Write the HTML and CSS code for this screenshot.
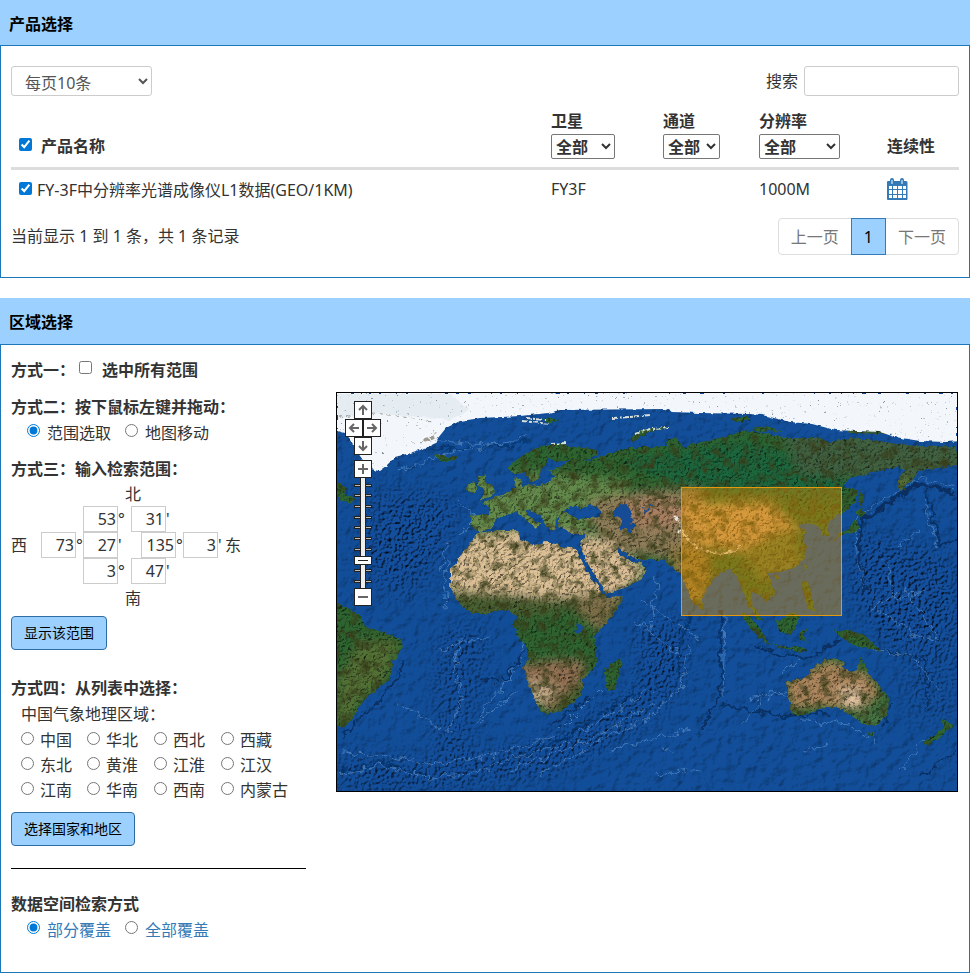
FILE: index.html
```html
<!DOCTYPE html>
<html lang="zh-CN">
<head>
<meta charset="utf-8">
<meta name="viewport" content="width=device-width, initial-scale=1">
<title>产品选择</title>
<link rel="stylesheet" href="styles.css">
</head>
<body>
<section class="panel">
  <h2 class="panel-head">产品选择</h2>
  <div class="panel-body products">
    <div class="toolbar">
      <select class="page-size" aria-label="每页条数"><option>每页10条</option></select>
      <label class="search">搜索 <input type="text"></label>
    </div>
    <table class="product-table">
      <thead>
        <tr>
          <th class="col-name"><label><input type="checkbox" checked><span>产品名称</span></label></th>
          <th class="col-sat"><label for="sat">卫星</label><select id="sat"><option>全部</option></select></th>
          <th class="col-chan"><label for="chan">通道</label><select id="chan"><option>全部</option></select></th>
          <th class="col-res"><label for="res">分辨率</label><select id="res"><option>全部</option></select></th>
          <th class="col-cont">连续性</th>
        </tr>
      </thead>
      <tbody>
        <tr>
          <td class="col-name"><label><input type="checkbox" checked><span>FY-3F中分辨率光谱成像仪L1数据(GEO/1KM)</span></label></td>
          <td>FY3F</td>
          <td></td>
          <td>1000M</td>
          <td><a class="calendar" href="#" aria-label="连续性"><svg width="21" height="22" viewBox="0 0 21 22"><path fill="#337ab7" d="M1 3h2V2a2 2 0 0 1 4 0v1h6V2a2 2 0 0 1 4 0v1h2a1.500 1.500 0 0 1 1.500 1.500V21a1 1 0 0 1-1 1H1a1 1 0 0 1-1-1V4a1 1 0 0 1 1-1z"/><path stroke="#fff" d="M5 2v4M15 2v4"/><path fill="#fff" d="M2 8h3v3H2zM6 8h4v3H6zM11 8h4v3h-4zM16 8h3v3h-3zM2 12h3v4H2zM6 12h4v4H6zM11 12h4v4h-4zM16 12h3v4h-3zM2 17h3v3H2zM6 17h4v3H6zM11 17h4v3h-4zM16 17h3v3h-3z"/></svg></a></td>
        </tr>
      </tbody>
    </table>
    <div class="table-foot">
      <span>当前显示 1 到 1 条，共 1 条记录</span>
      <nav class="pager"><a href="#">上一页</a><a class="current" href="#">1</a><a href="#">下一页</a></nav>
    </div>
  </div>
</section>

<section class="panel">
  <h2 class="panel-head region-head">区域选择</h2>
  <div class="panel-body region">
    <div class="side">
      <div class="line strong">方式一：<label class="all"><input type="checkbox"><span>选中所有范围</span></label></div>
      <div class="group">
        <h3>方式二：按下鼠标左键并拖动：</h3>
        <div class="line modes">
          <label><input type="radio" name="mode" checked><span>范围选取</span></label>
          <label><input type="radio" name="mode"><span>地图移动</span></label>
        </div>
      </div>
      <div class="group range-group">
        <h3>方式三：输入检索范围：</h3>
        <div class="pole">北</div>
        <div class="coords lat">
          <label><input type="text" value="53" aria-label="北纬度">°</label>
          <label><input type="text" value="31" aria-label="北纬分">'</label>
        </div>
        <div class="coords lon">
          <span class="west">西</span>
          <label><input type="text" value="73" aria-label="西经度">°</label>
          <label><input type="text" value="27" aria-label="西经分">'</label>
          <label class="east-deg"><input type="text" value="135" aria-label="东经度">°</label>
          <label><input type="text" value="3" aria-label="东经分">'</label>
          <span>东</span>
        </div>
        <div class="coords lat">
          <label><input type="text" value="3" aria-label="南纬度">°</label>
          <label><input type="text" value="47" aria-label="南纬分">'</label>
        </div>
        <div class="pole south">南</div>
        <button class="btn" type="button">显示该范围</button>
      </div>
      <div class="group list-group">
        <h3>方式四：从列表中选择：</h3>
        <div class="line sub">中国气象地理区域：</div>
        <div class="areas">
          <label><input type="radio" name="area"><span>中国</span></label>
          <label><input type="radio" name="area"><span>华北</span></label>
          <label><input type="radio" name="area"><span>西北</span></label>
          <label><input type="radio" name="area"><span>西藏</span></label>
          <label><input type="radio" name="area"><span>东北</span></label>
          <label><input type="radio" name="area"><span>黄淮</span></label>
          <label><input type="radio" name="area"><span>江淮</span></label>
          <label><input type="radio" name="area"><span>江汉</span></label>
          <label><input type="radio" name="area"><span>江南</span></label>
          <label><input type="radio" name="area"><span>华南</span></label>
          <label><input type="radio" name="area"><span>西南</span></label>
          <label><input type="radio" name="area"><span>内蒙古</span></label>
        </div>
        <button class="btn" type="button">选择国家和地区</button>
      </div>
      <hr>
      <h3>数据空间检索方式</h3>
      <div class="line modes cover">
        <label><input type="radio" name="cover" checked><span>部分覆盖</span></label>
        <label><input type="radio" name="cover"><span>全部覆盖</span></label>
      </div>
    </div>

    <div class="map">
      <svg class="world" viewBox="337 393 620 398" preserveAspectRatio="xMidYMid slice" role="img" aria-label="世界地图">
        <defs>
          <filter id="seaRelief" x="0" y="0" width="100%" height="100%" color-interpolation-filters="sRGB">
            <feTurbulence type="fractalNoise" baseFrequency=".1" numOctaves="4" seed="8" result="n"/>
            <feColorMatrix in="n" values="0 0 0 0 0  0 0 0 0 0  0 0 0 0 0  1 0 0 0 0" result="a"/>
            <feDiffuseLighting in="a" surfaceScale="1" diffuseConstant="1.420" lighting-color="#fff" result="l"><feDistantLight azimuth="225" elevation="45"/></feDiffuseLighting>
            <feComposite in="SourceGraphic" in2="l" operator="arithmetic" k1="1"/>
          </filter>
          <filter id="seaRough" x="0" y="0" width="100%" height="100%" color-interpolation-filters="sRGB">
            <feTurbulence type="fractalNoise" baseFrequency=".3" numOctaves="3" seed="3" result="n"/>
            <feColorMatrix in="n" values="0 0 0 0 0  0 0 0 0 0  0 0 0 0 0  1.500 0 0 0 0" result="a"/>
            <feDiffuseLighting in="a" surfaceScale="1.600" diffuseConstant="1.500" lighting-color="#fff" result="l"><feDistantLight azimuth="225" elevation="42"/></feDiffuseLighting>
            <feComposite in="SourceGraphic" in2="l" operator="arithmetic" k1="1"/>
          </filter>
          <filter id="landRelief" filterUnits="userSpaceOnUse" x="337" y="393" width="620" height="398" color-interpolation-filters="sRGB">
            <feTurbulence type="fractalNoise" baseFrequency=".4" numOctaves="3" seed="5" result="n"/>
            <feColorMatrix in="n" values="0 0 0 0 0  0 0 0 0 0  0 0 0 0 0  1.500 0 0 0 0" result="a"/>
            <feDiffuseLighting in="a" surfaceScale="1" diffuseConstant="1.500" lighting-color="#fff" result="l"><feDistantLight azimuth="225" elevation="42"/></feDiffuseLighting>
            <feComposite in="SourceGraphic" in2="l" operator="arithmetic" k1="1" result="lit"/>
            <feTurbulence type="fractalNoise" baseFrequency=".1" numOctaves="4" seed="21" result="t"/>
            <feColorMatrix in="t" values="0 0 0 0 .22  0 0 0 0 .24  0 0 0 0 .1  2.500 0 0 0 -1.150" result="blot"/>
            <feMerge result="mix"><feMergeNode in="lit"/><feMergeNode in="blot"/></feMerge>
            <feComposite in="mix" in2="SourceGraphic" operator="in" result="cut"/>
            <feTurbulence type="fractalNoise" baseFrequency=".18" numOctaves="2" seed="12" result="d"/>
            <feDisplacementMap in="cut" in2="d" scale="5" xChannelSelector="R" yChannelSelector="G"/>
          </filter>
          <filter id="iceGrain" filterUnits="userSpaceOnUse" x="337" y="393" width="620" height="398" color-interpolation-filters="sRGB">
            <feTurbulence type="fractalNoise" baseFrequency=".6" numOctaves="2" seed="4" result="n"/>
            <feColorMatrix in="n" values="0 0 0 0 .5  0 0 0 0 .55  0 0 0 0 .6  7 0 0 0 -5" result="s"/>
            <feComposite in="s" in2="SourceGraphic" operator="in" result="sp"/>
            <feMerge result="m"><feMergeNode in="SourceGraphic"/><feMergeNode in="sp"/></feMerge>
            <feTurbulence type="fractalNoise" baseFrequency=".18" numOctaves="2" seed="12" result="d"/>
            <feDisplacementMap in="m" in2="d" scale="4" xChannelSelector="R" yChannelSelector="G"/>
          </filter>
          <filter id="ridge" filterUnits="userSpaceOnUse" x="337" y="393" width="620" height="398">
            <feTurbulence type="fractalNoise" baseFrequency=".12" numOctaves="3" seed="2" result="d"/>
            <feDisplacementMap in="SourceGraphic" in2="d" scale="12" xChannelSelector="R" yChannelSelector="G"/>
          </filter>
          <filter id="soft" x="-30%" y="-30%" width="160%" height="160%"><feGaussianBlur stdDeviation="5"/></filter>
          <filter id="softer" x="-30%" y="-30%" width="160%" height="160%"><feGaussianBlur stdDeviation="12"/></filter>
          <mask id="roughMask"><g fill="#fff" filter="url(#softer)">
            <path d="M375 490L460 500L440 560L400 600L360 560z"/>
            <path d="M440 625L490 630L465 760L435 760z" opacity=".8"/>
            <path d="M337 757L440 765L540 745L640 690L650 720L560 770L440 790H337z"/>
            <path d="M860 530L957 560V640L890 650L850 590z"/>
            <path d="M900 640L957 640V720L910 720z" opacity=".6"/>
            <path d="M640 620L690 620L680 690L640 720z"/>
          </g></mask>
          <clipPath id="land">
            <!-- Europe and Asia -->
            <path d="M507 468L516 460L528 452L540 446L560 443L575 447L594 449L598 454L585 461L600 457L622 449L640 447L665 447L668 439L678 438L683 448L692 444L705 441L722 437L745 430L765 433L785 438L800 438L815 437L830 442L850 438L880 441L896 444L925 447L957 446V465L938 468L918 471L912 480L902 492L896 487L899 476L907 469L898 467L870 473L850 478L844 487L857 490L857 501L846 511L834 518L827 523L830 535L822 536L818 526L806 523L798 526L806 531L804 540L807 550L803 560L794 568L780 572L767 573L772 584L776 595L767 602L760 594L752 593L750 602L758 612L763 622L757 620L748 605L743 590L736 576L728 569L716 577L706 589L702 603L695 605L689 595L683 578L672 567L664 560L642 560L628 556L618 547L620 556L632 562L640 562L647 571L640 580L624 588L606 594L598 580L586 561L580 546L585 534L572 534L559 526L559 516L565 512L578 519L600 517L600 510L590 504L580 508L575 505L566 509L556 520L555 530L548 528L541 517L531 510L525 510L532 519L539 523L536 529L526 520L516 511L508 515L497 518L491 528L481 532L472 528L470 516L489 514L490 507L482 503L493 498L507 493L514 487L516 477L521 480L522 487L545 484L556 477L548 470L558 468L569 461L556 462L548 457L548 463L541 470L539 480L531 482L525 473L514 474z"/>
            <!-- Africa -->
            <path d="M477 533L500 530L519 530L521 539L535 546L548 541L560 546L576 549L588 573L599 588L607 597L624 596L615 613L601 629L595 637L597 658L597 665L583 680L583 691L574 702L560 712L545 714L540 713L535 700L528 682L523 668L528 658L526 647L517 635L514 625L517 616L510 611L500 610L486 614L472 614L460 604L450 590L450 571L457 560L465 550z"/>
            <path d="M605 668L620 658L622 665L615 690L608 691L605 680z"/>
            <!-- South America -->
            <path d="M337 603L350 610L361 616L365 626L385 633L401 639L402 649L393 662L389 680L376 690L364 700L354 716L345 727L337 725z"/>
            <!-- British Isles, Iceland, Labrador -->
            <path d="M478 477L485 475L486 482L492 486L496 491L492 496L480 500L484 493L483 488L478 485zM467 484L475 482L477 488L473 493L466 490zM433 456L440 454L448 457L457 456L455 460L443 462zM337 482L348 488L344 493L356 499L350 504L342 501L337 496z"/>
            <!-- Arctic islands -->
            <path d="M629 440L638 431L652 428L670 427L668 429L650 431L640 438L631 442zM540 418L561 419L550 424zM728 419L746 416L751 420L740 422zM750 428L766 426L784 431L760 432zM848 431L887 431L885 434L850 433z"/>
            <!-- Japan, Taiwan, Philippines -->
            <path d="M860 508L866 513L860 518L855 513zM855 518L859 529L850 534L840 536L832 542L837 534L849 529zM860 489L863 496L861 507L859 505zM805 563L808 568L804 571zM803 580L809 583L813 603L817 612L808 609L803 594zM774 575L780 577L777 580z"/>
            <!-- Indonesia and New Guinea -->
            <path d="M740 612L747 614L762 630L767 642L780 646L801 647L810 650L801 652L782 648L765 643L751 629zM775 622L785 617L793 611L800 617L795 628L792 635L780 632zM800 631L809 629L803 634L808 642L800 640zM832 627L838 632L848 630L865 635L880 650L888 652L875 650L863 648L850 644L840 636z"/>
            <!-- Australia and New Zealand -->
            <path d="M787 682L805 677L812 668L825 660L834 658L844 660L843 668L853 672L858 666L861 656L866 667L870 675L881 686L889 699L888 712L880 724L867 726L855 720L848 713L837 707L820 709L805 715L793 715L788 698zM866 732L876 733L873 738zM923 742L932 736L944 727L941 718L953 725L947 732L937 740L928 746z"/>
            <path d="M700 600L704 605L702 610L698 607z"/>
          </clipPath>
        </defs>
        <rect x="337" y="393" width="620" height="398" fill="#124e99" filter="url(#seaRelief)"/>
        <rect x="337" y="393" width="620" height="398" fill="#144f9d" filter="url(#seaRough)" mask="url(#roughMask)"/>
        <g filter="url(#ridge)" fill="none">
          <g stroke="#082f60" stroke-width="3">
            <path d="M957 493L938 490L918 483L880 508L860 522L859 555L865 590"/>
            <path stroke-width="4" d="M915 485L882 508L862 520"/>
            <path stroke-width="2" d="M926 490L932 510L935 530L940 545L957 540M722 610L720 695L700 730M720 705L780 716L830 714M752 645L780 655L810 657L840 640M885 650L925 660L928 710M957 750L930 770L920 775"/>
            <path stroke-width="2" d="M343 738L362 716L385 695L400 675L404 660M550 725L575 709L590 697M480 680L505 680L525 650M890 705L882 728"/>
            <path stroke-width="2" opacity=".6" d="M500 765L560 740L600 715L640 690M337 773L380 763L430 776M425 450L500 447L530 440M700 590L681 640L676 670"/>
          </g>
          <g stroke="#6ea0d6" stroke-width="1" opacity=".55">
            <path d="M955 488L920 478L878 503L857 517L856 555M925 497L929 520L937 545M858 560L864 585"/>
            <path d="M460 640L455 670L462 700L447 735M440 650L490 635M340 752L385 755L430 764L495 755L555 735M337 775L380 765L430 778L490 770"/>
            <path d="M490 765L560 745L600 720L650 690M510 770L590 740L650 705M540 775L610 735L645 720M560 730L600 690"/>
            <path d="M425 440L500 445L530 435M400 470L460 450L500 445M457 500L475 515L462 535M447 590L446 610M690 645L680 690L645 720"/>
            <path d="M725 615L723 695M660 745L675 755M790 700L770 690L740 725M870 650L910 655L940 690M900 770L925 740M780 674L800 660"/>
            <path d="M640 600L700 640M635 620L680 655M657 580L650 630M800 690L750 700M450 540L440 570M520 690L480 720M440 730L395 700"/>
            <path d="M447 560L444 610M525 620L521 660L500 690L475 720M885 560L895 600L925 590M870 610L905 590L940 640M900 545L920 530"/>
            <path d="M610 750L650 740L690 730M655 775L700 770M805 750L830 745M880 610L910 632L935 640M800 720L850 725L880 745"/>
          </g>
        </g>
        <g filter="url(#landRelief)"><g clip-path="url(#land)">
          <rect x="337" y="393" width="620" height="398" fill="#2e6430"/>
          <g filter="url(#soft)">
            <path fill="#638a4c" d="M460 475L540 472L630 480L620 510L560 540L465 540z"/>
            <path fill="#1b663d" d="M620 460L740 440L845 470L840 500L690 490z"/>
            <path fill="#3f603f" d="M780 430H960V480L800 475z"/>
            <path fill="#8d7c58" d="M590 500L650 490L700 490L715 535L680 560L610 550L590 520z"/>
            <path fill="#a88060" d="M618 500L670 498L690 520L655 530L632 525z"/>
            <path fill="#dcc096" d="M430 541L480 536L530 530L580 535L588 570L605 594L550 602L480 592L430 590z"/>
            <path fill="#dcbf96" d="M582 532L610 542L650 572L606 600L580 560z"/>
            <path fill="#c59a64" d="M681 505L770 502L800 530L740 552L700 545z"/>
            <path fill="#8b773c" d="M670 545L710 550L710 590L692 610L672 580z"/>
            <path fill="#4a6030" d="M440 592L500 593L555 598L600 593L600 608L500 620L450 615z"/>
            <path fill="#7d7048" d="M580 597L628 590L604 633L590 625L575 610z"/>
            <path fill="#927152" d="M518 665L550 660L585 660L580 695L550 710L530 700z"/>
            <path fill="#c0a786" d="M522 680L545 682L560 690L540 706L530 700z"/>
            <path fill="#4b5e2f" d="M555 700L585 680L575 705L550 720z"/>
            <path fill="#527034" d="M360 640L400 640L385 680L360 700L350 720L337 725V680z"/>
            <path fill="#ab855c" d="M785 680L830 660L870 675L880 695L860 710L820 706L790 710z"/>
            <path fill="#e8c9a8" d="M835 690L860 688L865 705L850 708z"/>
            <path fill="#477445" d="M852 718L880 705L895 695V730H850z"/>
            <path fill="#60753a" d="M740 550L790 525L805 570L760 580zM895 480L910 475L910 490L898 495z"/>
          </g>
          <g fill="none" stroke-linecap="round">
            <path stroke="#e7d6b5" stroke-width="2" d="M681 530L690 541L703 551L720 554L735 551L740 546"/>
            <path stroke="#eee5d8" stroke-width="3" stroke-dasharray="3 4" d="M676 517L681 524L679 532"/>
          </g>
        </g></g>
        <g filter="url(#ridge)" fill="#124c96"><path d="M618 506L628 504L631 511L629 517L634 521L632 530L622 531L620 521L615 516L614 511z"/><ellipse cx="578" cy="628" rx="4" ry="3"/><path d="M643 507L650 506L649 511L644 511z"/></g>
        <g filter="url(#iceGrain)">
          <path fill="#f3f7fb" d="M334 389H962V441L945 442L920 441L895 437L880 432L835 430L812 424L790 422L762 415L750 414L700 413L672 412L665 409L560 410L548 413L520 416L480 418L460 421L446 428L438 438L436 443L425 448L410 453L395 457L386 466L379 471L370 469L360 456L350 439L345 433L334 430z"/>
          <path fill="#dce6ed" d="M337 394L450 394L470 410L450 420L420 417L380 414L337 418z" opacity=".6"/>
          <path fill="none" stroke="#99958a" stroke-width="1" stroke-dasharray="3 5" d="M340 417L375 413L410 418L432 421M421 443L433 436L438 430"/>
          <path fill="none" stroke="#766f5c" stroke-width="4" stroke-dasharray="5 2" opacity=".7" d="M424 441L434 437"/>
          <path fill="none" stroke="#d8e0dc" stroke-width="2" stroke-dasharray="5 2 3 1" d="M522 421L550 424M526 418L545 420M612 418L630 417L650 415M635 434L650 429L669 428M550 444L566 443"/>
        </g>
        <rect x="681.5" y="487.5" width="160" height="128" fill="#e90" fill-opacity=".4"/>
        <path fill="#e39a10" d="M681 487h161v129H681zm1 1v127h159V488z" fill-rule="evenodd"/>
      </svg>
      <div class="map-nav">
        <button class="nav up" type="button" aria-label="向上"><svg viewBox="0 0 16 16"><path d="M8 13V4M4 8l4-4 4 4"/></svg></button>
        <button class="nav left" type="button" aria-label="向左"><svg viewBox="0 0 16 16"><path d="M13 8H4M8 4L4 8l4 4"/></svg></button>
        <button class="nav right" type="button" aria-label="向右"><svg viewBox="0 0 16 16"><path d="M3 8h9M8 4l4 4-4 4"/></svg></button>
        <button class="nav down" type="button" aria-label="向下"><svg viewBox="0 0 16 16"><path d="M8 3v9M4 8l4 4 4-4"/></svg></button>
      </div>
      <div class="map-zoom">
        <button class="nav" type="button" aria-label="放大"><svg viewBox="0 0 16 16"><path d="M3 8h10M8 3v10"/></svg></button>
        <div class="slider">
          <svg class="ticks" viewBox="0 0 18 110"><g stroke="#222" stroke-width="3"><path d="M0 7.500h18M0 17.500h18M0 28.500h18M0 39.500h18M0 49.500h18M0 60.500h18M0 71.500h18M0 92.500h18M0 103.500h18"/></g><g stroke="#bbb"><path d="M1 7.500h16M1 17.500h16M1 28.500h16M1 39.500h16M1 49.500h16M1 60.500h16M1 71.500h16M1 92.500h16M1 103.500h16"/></g></svg>
          <input type="range" min="0" max="11" step="0.5" value="2.5" aria-label="缩放级别">
        </div>
        <button class="nav" type="button" aria-label="缩小"><svg viewBox="0 0 16 16"><path d="M3 8h10"/></svg></button>
      </div>
    </div>
  </div>
</section>
</body>
</html>
```
FILE: styles.css
```css
* {
  box-sizing: border-box;
}

body {
  margin: 0;
  color: #333;
  background: #fff;
  font: 16px/26px "Noto Sans", "Noto Sans CJK SC", sans-serif;
}

input,
select,
button {
  font-family: inherit;
  color: inherit;
}

input[type="checkbox"],
input[type="radio"] {
  flex: none;
  width: 13px;
  height: 13px;
  margin: 0 6px 4px 0;
  accent-color: #0078d7;
}

label {
  display: flex;
  align-items: center;
}

h2,
h3 {
  margin: 0;
  font-size: 16px;
  font-weight: bold;
}

a {
  color: #337ab7;
  text-decoration: none;
}

.panel {
  margin-bottom: 20px;
}

.panel:last-child {
  margin-bottom: 0;
}

.panel-head {
  padding: 11px 9px 8px;
  color: #000;
  background: #9bd0ff;
}

.region-head {
  padding-bottom: 9px;
}

.panel-body {
  border: 1px solid #1c77b8;
}

.products {
  padding: 20px 10px 22px;
}

.toolbar {
  display: flex;
  justify-content: space-between;
  align-items: center;
  height: 30px;
}

.page-size {
  width: 141px;
  height: 30px;
  padding: 4px 0 0 9px;
  color: #555;
  background: #fff;
  border: 1px solid #ccc;
  border-radius: 3px;
  font-size: 16px;
}

.search {
  gap: 6px;
}

.search input {
  width: 155px;
  height: 30px;
  border: 1px solid #ccc;
  border-radius: 3px;
  font-size: 16px;
}

.product-table {
  width: 100%;
  margin-top: 12px;
  table-layout: fixed;
  border-collapse: collapse;
}

.product-table th {
  padding: 0 0 8px;
  text-align: left;
  vertical-align: bottom;
  border-bottom: 3px solid #ddd;
}

.product-table td {
  height: 39px;
  padding: 0;
  vertical-align: middle;
}

.product-table th select {
  display: block;
  height: 25px;
  padding: 0;
  background: #fff;
  border: 1px solid #767676;
  border-radius: 2px;
  font-size: 16px;
  font-weight: bold;
}

.product-table .col-name label {
  padding-left: 8px;
}

.product-table td.col-name {
  padding-top: 3px;
}

.product-table td label input {
  margin-right: 5px;
}

.product-table th label input {
  margin-right: 9px;
}

.col-sat {
  width: 112px;
}

.col-sat select {
  width: 64px;
}

.col-chan {
  width: 96px;
}

.col-chan select {
  width: 57px;
}

.col-res {
  width: 128px;
}

.col-res select {
  width: 81px;
}

.col-cont {
  width: 72px;
}

.calendar,
.calendar svg {
  display: block;
}

.table-foot {
  display: flex;
  justify-content: space-between;
  align-items: center;
  margin-top: 10px;
}

.pager {
  display: flex;
  border: 1px solid #ddd;
  border-radius: 4px;
}

.pager a {
  padding: 5px 12px 4px;
  color: #777;
}

.pager .current {
  margin: -1px 0;
  color: #000;
  background: #9bd0ff;
  border: 1px solid #337ab7;
}

.region {
  display: flex;
  align-items: flex-start;
  gap: 30px;
  padding: 12px 11px 29px 10px;
}

.side {
  flex: 0 0 295px;
}

.line {
  display: flex;
  height: 26px;
}

.strong {
  font-weight: bold;
}

.all {
  padding-left: 4px;
}

.all input[type="checkbox"] {
  margin-right: 10px;
}

.group {
  margin-top: 11px;
}

.range-group {
  margin-top: 10px;
}

.modes {
  gap: 14px;
  padding-left: 16px;
}

.modes label input {
  margin-right: 7px;
}

.pole {
  padding-left: 114px;
  line-height: 24px;
}

.south {
  line-height: 28px;
}

.coords {
  display: flex;
}

.coords label {
  width: 42px;
}

.coords input {
  flex: none;
  width: 35px;
  height: 26px;
  padding: 0 1px;
  text-align: right;
  background: #fff;
  border: 1px solid #ccc;
  font-size: 16px;
}

.lat {
  gap: 6px;
  padding-left: 72px;
}

.west {
  width: 30px;
}

.coords .east-deg {
  margin-left: 16px;
}

.btn {
  display: block;
  height: 34px;
  margin-top: 4px;
  padding: 0 12px 2px;
  color: #000;
  background: #9bd0ff;
  border: 1px solid #2e6da4;
  border-radius: 4px;
  font-size: 14px;
}

.list-group {
  margin-top: 25px;
}

.list-group .btn {
  margin-top: 9px;
}

.sub {
  padding-left: 10px;
}

.areas {
  display: grid;
  grid-template-columns: 66px 67px 67px auto;
  padding: 1px 0 0 10px;
  line-height: 25px;
}

hr {
  margin: 22px 0;
  border: 0;
  border-top: 1px solid #000;
}

.cover {
  color: #337ab7;
}

.map {
  position: relative;
  flex: 1;
  min-width: 0;
  margin-top: 35px;
  border: 1px solid #000;
  overflow: hidden;
}

.world {
  display: block;
  width: 100%;
}

.map-nav {
  position: absolute;
  top: 8px;
  left: 8px;
  display: grid;
  grid-template-columns: repeat(4, 9px);
  grid-auto-rows: 18px;
}

.map-zoom {
  position: absolute;
  top: 67px;
  left: 17px;
}

.nav {
  display: block;
  width: 18px;
  height: 18px;
  padding: 0;
  background: #fff;
  border: 1px solid #222;
}

.nav svg {
  display: block;
  fill: none;
  stroke: #666;
  stroke-width: 2;
}

.up,
.down {
  grid-column: 2 / span 2;
}

.left {
  grid-column: 1 / span 2;
}

.right {
  grid-column: 3 / span 2;
}

.slider {
  position: relative;
  width: 18px;
  height: 110px;
}

.ticks {
  display: block;
  width: 18px;
  height: 110px;
}

.slider input {
  position: absolute;
  top: 0;
  left: 0;
  width: 18px;
  height: 110px;
  margin: 0;
  appearance: none;
  background: linear-gradient(90deg, #222 1px, #eee 1px 5px, #222 5px) center / 6px 100% no-repeat;
  writing-mode: vertical-lr;
  direction: rtl;
}

.slider input::-webkit-slider-thumb {
  width: 18px;
  height: 9px;
  appearance: none;
  background: linear-gradient(#222, #222) center / 10px 1px no-repeat #fff;
  border: 1px solid #222;
}
```
